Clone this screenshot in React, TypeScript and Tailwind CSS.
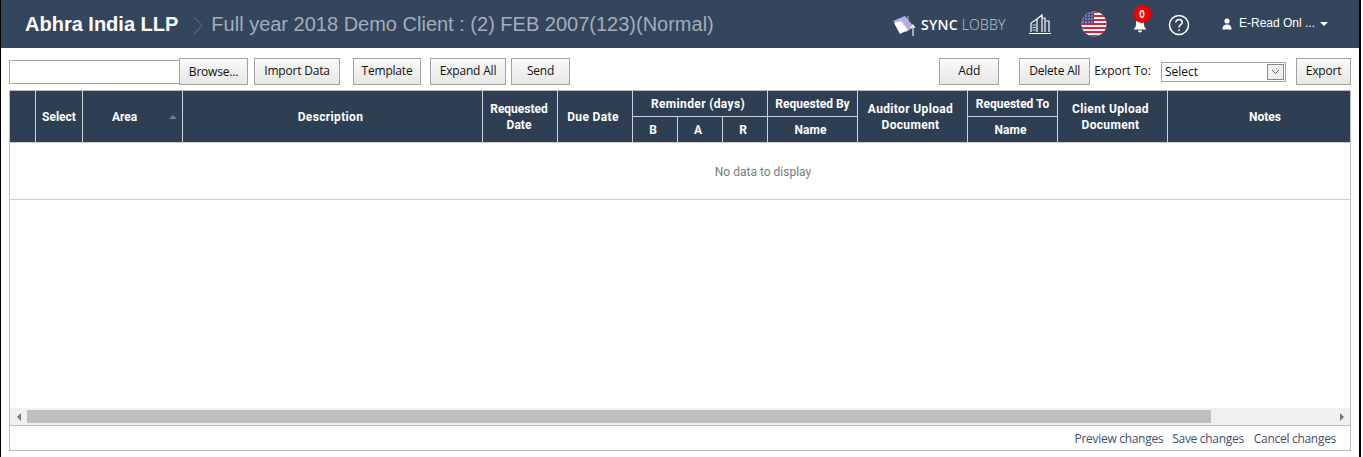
import React from "react";

const sans = "font-['Liberation_Sans',Arial,sans-serif]";
const ui = "font-['Open_Sans','Noto_Sans',sans-serif]";
const head = "font-['Roboto','Noto_Sans',sans-serif]";

function Btn({ w, children, className = "" }: { w: string; children: React.ReactNode; className?: string }) {
  return (
    <button className={`${w} h-[27px] flex items-center justify-center border border-[#a3a3a3] bg-gradient-to-b from-[#fafafa] to-[#e6e6e6] text-[12px] tracking-[-0.2px] text-[#111] ${className}`}>
      {children}
    </button>
  );
}

function Flag() {
  const stripes = [0, 2, 4, 6, 8, 10, 12];
  return (
    <svg width="26" height="26" viewBox="0 0 26 26">
      <defs>
        <clipPath id="flagc"><circle cx="13" cy="13" r="12.5" /></clipPath>
      </defs>
      <g clipPath="url(#flagc)">
        <rect width="26" height="26" fill="#f4f4f6" />
        {stripes.map((s) => (
          <rect key={s} y={s * 2} width="26" height="2" fill="#c8283c" />
        ))}
        <rect width="13" height="12" fill="#46467f" />
        {[2, 5, 8, 11].map((x) =>
          [2, 5, 8, 11].map((y) => <circle key={`${x}-${y}`} cx={x} cy={y} r="0.7" fill="#ddd" />)
        )}
      </g>
    </svg>
  );
}

function Header() {
  return (
    <header className={`h-[48px] bg-[#34465d] flex items-center text-white ${sans}`}>
      <div className="pl-[24px] text-[20px] font-bold leading-none">Abhra India LLP</div>
      <svg width="10" height="19" viewBox="0 0 10 19" className="ml-[15px] mr-[8px] mt-[3px]">
        <path d="M1 1 L9 9.5 L1 18" fill="none" stroke="#66758a" strokeWidth="1" />
      </svg>
      <div className="text-[20px] leading-none text-[#a4adb8]">Full year 2018 Demo Client : (2) FEB 2007(123)(Normal)</div>
      <div className="ml-auto flex items-center pr-[31px]">
        <svg width="27" height="21" viewBox="0 0 27 21" className="mr-[2px] mt-[2px]">
          <path d="M1 6 L13 1 L22 12 L14 17 Z" fill="#b5b0ea" />
          <path d="M2 8 L9 6 L16 15 L8 19 Z" fill="#fff" />
          <path d="M16 1 V11 M14 9 L16 12 L18 9" fill="none" stroke="#a9afbb" strokeWidth="1.1" />
          <path d="M21 21 V11 M19 13 L21 10 L23 13" fill="none" stroke="#fff" strokeWidth="1.1" />
        </svg>
        <div className={`text-[14px] leading-none w-[84px] mt-[1px] tracking-[0.25px] whitespace-nowrap ${ui}`}>
          <span className="font-semibold">SYNC</span> <span className="font-light text-[#c4cad2]">LOBBY</span>
        </div>
        <svg width="24" height="22" viewBox="0 0 24 22" className="ml-[23px]" fill="none" stroke="#fff">
          <path d="M3 10 L9 6 V19 M3 10 V19 M9 6 L14 2 V19 M14 5 H17 V19 M18 8 H21 V19 M1 20.5 H23" strokeWidth="1.2" />
          <path d="M4.5 12 H8 M4.5 14.5 H8 M4.5 17 H8" strokeWidth="0.8" />
        </svg>
        <div className="ml-[29px]"><Flag /></div>
        <div className="relative ml-[25px] w-[16px] h-[16px] mt-[6px]">
          <svg width="16" height="16" viewBox="0 0 16 16" className="-mt-[2px]">
            <path d="M8 1 C5 1 4 4 4 7 C4 10 3 11 1.5 12.5 H14.5 C13 11 12 10 12 7 C12 4 11 1 8 1 Z M6 13.5 A2 2 0 0 0 10 13.5 Z" fill="#fff" />
          </svg>
          <span className="absolute left-[1px] top-[-14px] w-[18px] h-[18px] rounded-full bg-[#f00000] flex items-center justify-center text-[10px] font-bold">0</span>
        </div>
        <svg width="22" height="22" viewBox="0 0 22 22" className="ml-[20px] mt-[2px]" fill="none" stroke="#fff" strokeWidth="1.5">
          <circle cx="11" cy="11" r="9.5" />
          <path d="M7.8 8.6 C7.8 6.6 9.3 5.6 11 5.6 C12.8 5.6 14.2 6.7 14.2 8.4 C14.2 10.6 11 10.8 11 13.4" />
          <circle cx="11" cy="16.2" r="0.9" fill="#fff" stroke="none" />
        </svg>
        <svg width="10" height="12" viewBox="0 0 10 12" className="ml-[32px]" fill="#fff">
          <circle cx="5" cy="3" r="2.6" />
          <path d="M0.5 11.5 C0.5 7.5 2.5 6.5 5 6.5 C7.5 6.5 9.5 7.5 9.5 11.5 Z" />
        </svg>
        <span className="ml-[7px] text-[12px] leading-none mb-[2px]">E-Read Onl ...</span>
        <span className="ml-[5px] w-0 h-0 border-x-[4px] border-x-transparent border-t-[4px] border-t-white" />
      </div>
    </header>
  );
}

function Toolbar() {
  return (
    <div className={`h-[42px] flex items-center pl-[8px] pr-[8px] pt-[4px] ${ui}`}>
      <div className="w-[171px] h-[24px] mt-[1px] border border-[#a3a3a3] bg-white" />
      <Btn w="w-[69px]" className="h-[24px] mt-[1px] -ml-[1px]">Browse...</Btn>
      <Btn w="w-[86px]" className="ml-[6px]">Import Data</Btn>
      <Btn w="w-[68px]" className="ml-[13px]">Template</Btn>
      <Btn w="w-[76px]" className="ml-[9px]">Expand All</Btn>
      <Btn w="w-[59px]" className="ml-[5px]">Send</Btn>
      <Btn w="w-[60px]" className="ml-auto">Add</Btn>
      <Btn w="w-[71px]" className="ml-[20px]">Delete All</Btn>
      <span className="ml-[4px] text-[12px] text-[#111]">Export To:</span>
      <div className="ml-[10px] w-[125px] h-[20px] border border-[#a3a3a3] flex items-center justify-between pl-[3px] pr-[1px] mt-[1px] text-[12px] text-[#111]">
        <span className="pt-[1px]">Select</span>
        <span className="w-[17px] h-[16px] border border-[#8a8a8a] bg-[#f0f0f0] flex items-center justify-center">
          <svg width="9" height="6" viewBox="0 0 9 6"><path d="M1 1 L4.5 4.5 L8 1" fill="none" stroke="#666" /></svg>
        </span>
      </div>
      <Btn w="w-[55px]" className="ml-[10px]">Export</Btn>
    </div>
  );
}

const col = "border-r border-[#cfd3d8] flex items-center justify-center text-center";
const sub = "flex items-center justify-center text-center";
const wide = "tracking-[0.35px]";

function TableHead() {
  return (
    <div className={`h-[51px] bg-[#2e3f53] text-white text-[12px] font-bold leading-[16px] flex ${head}`}>
      <div className={`${col} w-[26px]`} />
      <div className={`${col} w-[47px]`}>Select</div>
      <div className={`${col} w-[100px] relative pr-[16px]`}>
        Area
        <span className="absolute right-[5px] top-[24px] w-0 h-0 border-x-[4px] border-x-transparent border-b-[4px] border-b-[#6f7d8d]" />
      </div>
      <div className={`${col} w-[300px] pr-[4px] ${wide}`}>Description</div>
      <div className={`${col} w-[75px] pr-[2px]`}>Requested<br />Date</div>
      <div className={`${col} w-[75px] pr-[4px] ${wide}`}>Due Date</div>
      <div className="w-[135px] border-r border-[#cfd3d8] flex flex-col">
        <div className={`${sub} h-[26px] border-b border-[#cfd3d8] pr-[4px] ${wide}`}>Reminder (days)</div>
        <div className="flex-1 flex">
          <div className={`${col} w-[45px] pr-[4px]`}>B</div>
          <div className={`${col} w-[45px] pr-[4px]`}>A</div>
          <div className={`${sub} w-[44px] pr-[4px]`}>R</div>
        </div>
      </div>
      <div className="w-[90px] border-r border-[#cfd3d8] flex flex-col">
        <div className={`${sub} h-[26px] border-b border-[#cfd3d8]`}>Requested By</div>
        <div className={`${sub} flex-1 pr-[4px]`}>Name</div>
      </div>
      <div className={`${col} w-[110px] pr-[4px] ${wide}`}>Auditor Upload<br />Document</div>
      <div className="w-[90px] border-r border-[#cfd3d8] flex flex-col">
        <div className={`${sub} h-[26px] border-b border-[#cfd3d8]`}>Requested To</div>
        <div className={`${sub} flex-1 pr-[4px]`}>Name</div>
      </div>
      <div className={`${col} w-[110px] pr-[4px] ${wide}`}>Client Upload<br />Document</div>
      <div className={`${sub} flex-1 pl-[12px]`}>Notes</div>
    </div>
  );
}

export default function App() {
  return (
    <div className="w-[1363px] h-[457px] bg-white overflow-hidden flex">
      <div className="w-[1px] bg-black" />
      <div className="w-[1358px] flex flex-col">
        <Header />
        <Toolbar />
        <div className="mx-[8px] h-[361px] border border-[#bdbdbd] flex flex-col">
          <TableHead />
          <div className={`h-[58px] border-t border-b border-[#d0d0d0] flex items-center justify-center pl-[166px] pt-[2px] text-[12px] text-[#7b7b7b] ${head}`}>
            No data to display
          </div>
          <div className="flex-1" />
          <div className="h-[17px] bg-[#f0f0f0] flex items-center">
            <div className="w-[17px] flex justify-center">
              <span className="w-0 h-0 border-y-[4px] border-y-transparent border-r-[4px] border-r-[#777]" />
            </div>
            <div className="w-[1184px] h-[13px] bg-[#bfbfbf]" />
            <div className="ml-auto w-[17px] flex justify-center">
              <span className="w-0 h-0 border-y-[4px] border-y-transparent border-l-[4px] border-l-[#777]" />
            </div>
          </div>
          <div className={`h-[25px] border-t border-[#bdbdbd] flex items-center justify-end gap-[9px] pr-[14px] pt-[2px] text-[12px] tracking-[-0.3px] text-[#44506a] ${ui}`}>
            <span>Preview changes</span>
            <span className="mr-[1px]">Save changes</span>
            <span>Cancel changes</span>
          </div>
        </div>
      </div>
      <div className="w-[2px] bg-black" />
    </div>
  );
}
